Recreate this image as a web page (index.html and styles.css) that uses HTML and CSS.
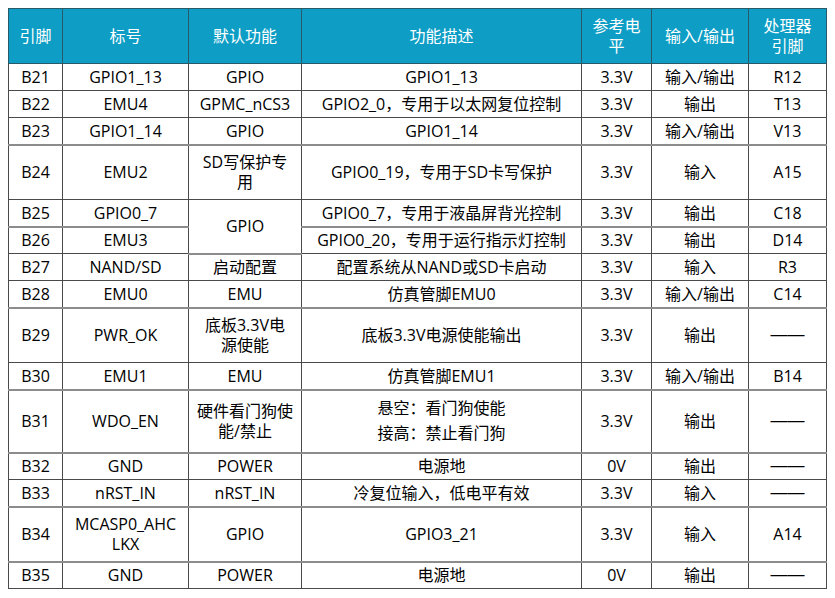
FILE: index.html
```html
<!DOCTYPE html>
<html lang="zh">
<head>
<meta charset="utf-8">
<title>引脚定义</title>
<link rel="stylesheet" href="styles.css">
</head>
<body>
<table class="pins">
  <colgroup>
    <col class="c1"><col class="c2"><col class="c3"><col class="c4"><col class="c5"><col class="c6"><col class="c7">
  </colgroup>
  <thead>
    <tr class="head">
      <th>引脚</th><th>标号</th><th>默认功能</th><th>功能描述</th><th>参考电<br>平</th><th>输入/输出</th><th>处理器<br>引脚</th>
    </tr>
  </thead>
  <tbody>
    <tr class="r1"><td>B21</td><td>GPIO1_13</td><td>GPIO</td><td>GPIO1_13</td><td>3.3V</td><td>输入/输出</td><td>R12</td></tr>
    <tr class="r1"><td>B22</td><td>EMU4</td><td>GPMC_nCS3</td><td>GPIO2_0，专用于以太网复位控制</td><td>3.3V</td><td>输出</td><td>T13</td></tr>
    <tr class="r1 gray"><td>B23</td><td>GPIO1_14</td><td>GPIO</td><td>GPIO1_14</td><td>3.3V</td><td>输入/输出</td><td>V13</td></tr>
    <tr class="r2"><td>B24</td><td>EMU2</td><td>SD写保护专<br>用</td><td>GPIO0_19，专用于SD卡写保护</td><td>3.3V</td><td>输入</td><td>A15</td></tr>
    <tr class="r1 gray"><td>B25</td><td>GPIO0_7</td><td rowspan="2">GPIO</td><td>GPIO0_7，专用于液晶屏背光控制</td><td>3.3V</td><td>输出</td><td>C18</td></tr>
    <tr class="r1"><td>B26</td><td>EMU3</td><td>GPIO0_20，专用于运行指示灯控制</td><td>3.3V</td><td>输出</td><td>D14</td></tr>
    <tr class="r1"><td>B27</td><td>NAND/SD</td><td>启动配置</td><td>配置系统从NAND或SD卡启动</td><td>3.3V</td><td>输入</td><td>R3</td></tr>
    <tr class="r1 gray"><td>B28</td><td>EMU0</td><td>EMU</td><td>仿真管脚EMU0</td><td>3.3V</td><td>输入/输出</td><td>C14</td></tr>
    <tr class="r2"><td>B29</td><td>PWR_OK</td><td>底板3.3V电<br>源使能</td><td>底板3.3V电源使能输出</td><td>3.3V</td><td>输出</td><td class="dash">——</td></tr>
    <tr class="r1 gray"><td>B30</td><td>EMU1</td><td>EMU</td><td>仿真管脚EMU1</td><td>3.3V</td><td>输入/输出</td><td>B14</td></tr>
    <tr class="r3 gray"><td>B31</td><td>WDO_EN</td><td>硬件看门狗使<br>能/禁止</td><td><div class="para">悬空：看门狗使能</div><div class="para">接高：禁止看门狗</div></td><td>3.3V</td><td>输出</td><td class="dash">——</td></tr>
    <tr class="r1"><td>B32</td><td>GND</td><td>POWER</td><td>电源地</td><td>0V</td><td>输出</td><td class="dash">——</td></tr>
    <tr class="r1 gray"><td>B33</td><td>nRST_IN</td><td>nRST_IN</td><td>冷复位输入，低电平有效</td><td>3.3V</td><td>输入</td><td class="dash">——</td></tr>
    <tr class="r2 gray"><td>B34</td><td>MCASP0_AHC<br>LKX</td><td>GPIO</td><td>GPIO3_21</td><td>3.3V</td><td>输入</td><td>A14</td></tr>
    <tr class="r1"><td>B35</td><td>GND</td><td>POWER</td><td>电源地</td><td>0V</td><td>输出</td><td class="dash">——</td></tr>
  </tbody>
</table>
</body>
</html>
```

FILE: styles.css
```css
html, body {
  background: #ffffff;
}
body {
  margin: 8px;
  font-family: "Open Sans", "Noto Sans CJK SC", sans-serif;
  font-size: 16px;
  color: #000000;
}
.pins {
  width: 818px;
  table-layout: fixed;
  border-collapse: collapse;
  border: 1px solid #3c3c3c;
}
.c1 { width: 54px; }
.c2 { width: 126px; }
.c3 { width: 113px; }
.c4 { width: 280px; }
.c5 { width: 70px; }
.c6 { width: 97px; }
.c7 { width: 78px; }

.pins th,
.pins td {
  border: 1px solid #4a4a4a;
  padding: 0 2px;
  text-align: center;
  vertical-align: middle;
  line-height: 20px;
  white-space: nowrap;
  font-weight: normal;
}
.pins th {
  background: #0e9ec5;
  color: #ffffff;
  border-color: #2a5a6a;
}
.head { height: 55px; }
.r1 { height: 27px; }
.r2 { height: 55px; }
.r3 { height: 63px; }
.gray td {
  border-bottom: 2px solid #8c8c8c;
}
.para {
  line-height: 25px;
}
.pins td.dash {
  letter-spacing: 0;
  font-family: "Liberation Sans", sans-serif;
  font-size: 17px;
}
```
